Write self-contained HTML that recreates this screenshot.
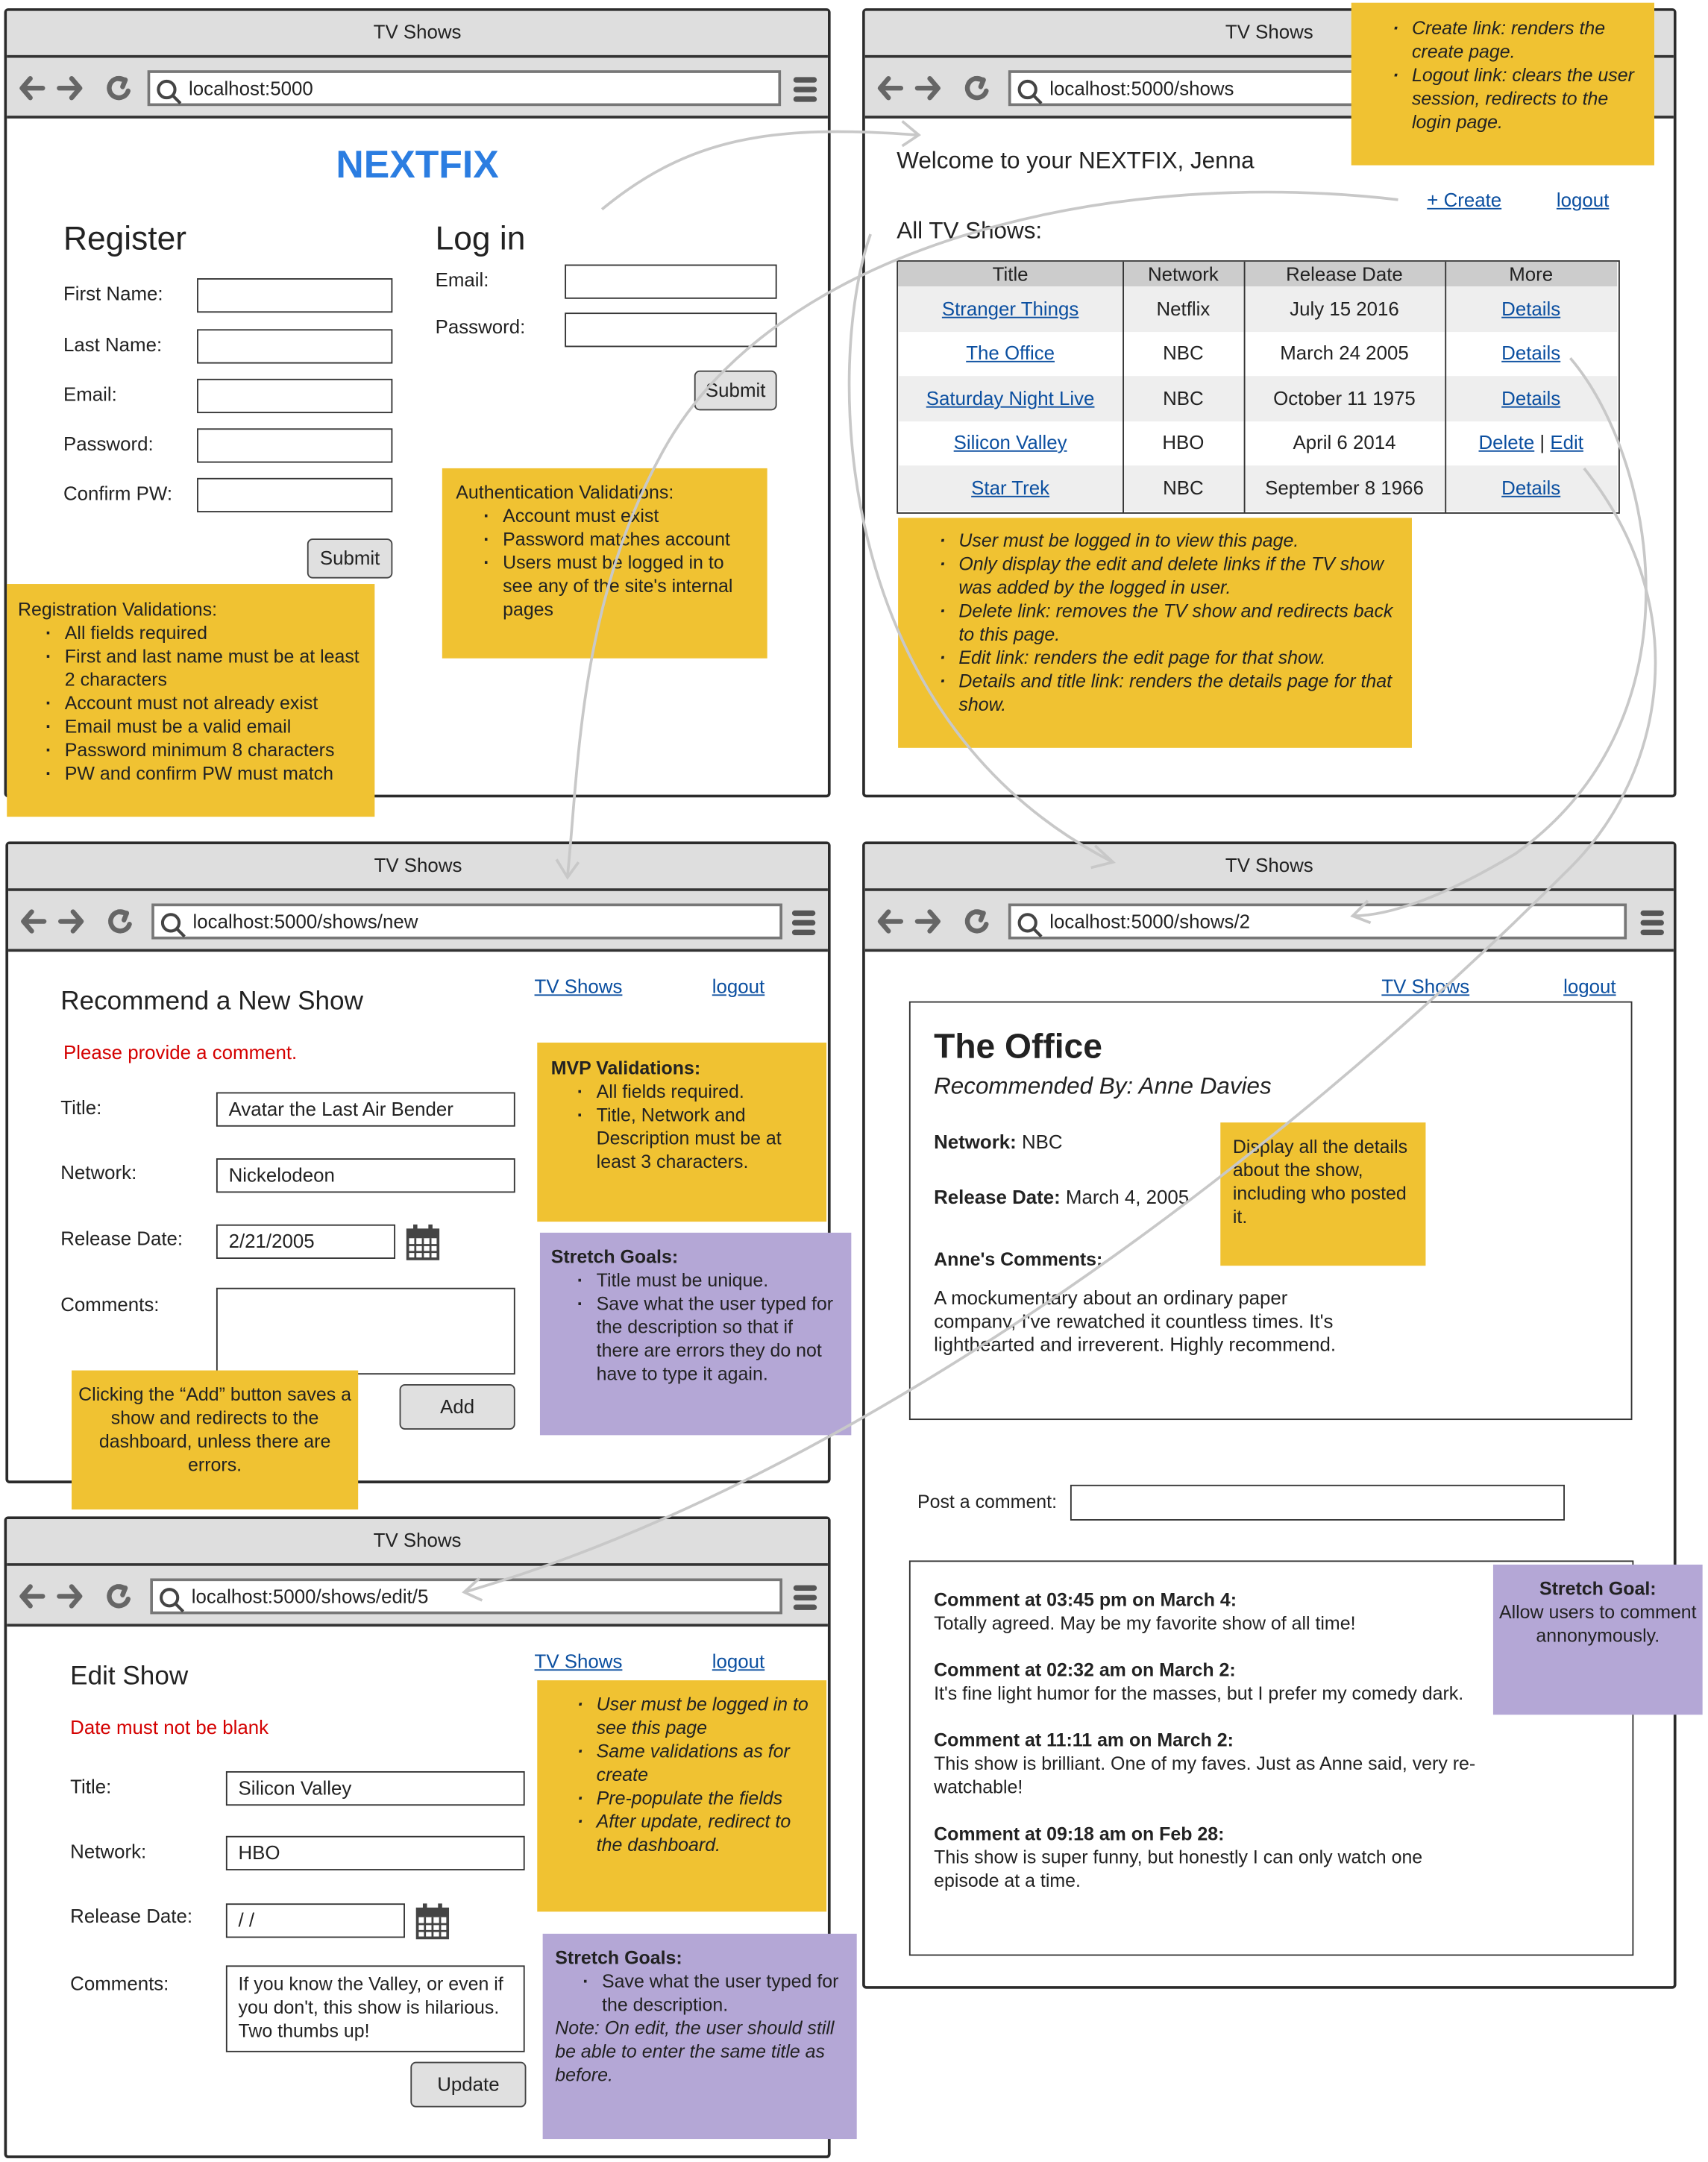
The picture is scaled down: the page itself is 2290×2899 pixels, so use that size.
<!DOCTYPE html>
<html><head><meta charset="utf-8">
<style>
html,body{margin:0;padding:0;background:#fff;}
body{width:2290px;height:2898px;overflow:hidden;position:relative;}
#s{position:absolute;left:0;top:0;width:1240px;height:1570px;transform:scale(1.8468);transform-origin:0 0;font-family:"Liberation Sans",sans-serif;font-size:14px;color:#222;}
#s div,#s span.a{position:absolute;box-sizing:border-box;}
.w{border:2px solid #2b2b2b;border-radius:3px;background:#fff;}
.tb{left:0;right:0;top:0;height:34px;background:#dedede;border-bottom:2px solid #333;text-align:center;line-height:30px;font-size:14px;}
.nb{left:0;right:0;top:34px;height:44px;background:#dedede;border-bottom:2px solid #333;}
.url{top:9px;height:26px;background:#fff;border:2px solid #777;line-height:22px;padding-left:28px;font-size:14px;}
.in{border:1.5px solid #333;background:#fff;height:25px;line-height:22px;padding-left:8px;font-size:14px;}
.btn{background:#e0e0e0;border:1.5px solid #444;border-radius:4px;text-align:center;font-size:14px;}
.y{background:#f0c232;}
.p{background:#b4a7d6;}
.n{font-size:13.5px;line-height:17px;}
.n ul{margin:0;padding-left:34px;list-style:none;}
.n li{position:relative;}
.n li:before{content:"·";position:absolute;left:-14px;font-weight:bold;}
a,.l{color:#0b4fa0;text-decoration:underline;}
.red{color:#d40000;}
</style></head><body><div id="s">

<!-- arrows -->
<svg style="position:absolute;left:0;top:0;z-index:5;pointer-events:none" width="1240" height="1570" fill="none" stroke="#c8c8c8" stroke-width="2">
<path d="M437 152 C500 100 560 90 666 98"/><path d="M655 88 L667 98 L655 106"/>
<path d="M1015 145 C800 120 560 180 480 330 C420 440 420 560 412 636"/><path d="M404 624 L412 637 L420 626"/>
<path d="M632 170 C600 260 600 520 808 626"/><path d="M795 614 L808 626 L792 630"/>
<path d="M1140 260 C1200 330 1240 520 1100 620 C1050 650 1010 665 982 665"/><path d="M993 654 L982 665 L995 670"/>
<path d="M1150 340 C1230 440 1210 560 1140 630 C900 870 600 1080 337 1156"/><path d="M348 1146 L337 1156 L350 1162"/>
</svg>

<!-- W1 -->
<div class="w" style="left:3px;top:6px;width:600px;height:573px">
 <div class="tb">TV Shows</div>
 <div class="nb">
  <svg style="position:absolute;left:8px;top:12px" width="90" height="20" fill="none" stroke="#666" stroke-width="3.5" stroke-linecap="round" stroke-linejoin="round"><path d="M18 10H3M9 3L3 10L9 17"/><path d="M30 10H45M39 3L45 10L39 17"/><path d="M77 4A7 7 0 1 0 80 12"/><path d="M72 3L78 4L76 9"/></svg>
  <div class="url" style="left:102px;width:460px">localhost:5000</div>
  <svg style="position:absolute;left:108px;top:15px" width="20" height="20" fill="none" stroke="#444" stroke-width="2.2"><circle cx="8" cy="8" r="6"/><path d="M12 12L18 18"/></svg>
  <svg style="position:absolute;left:570px;top:13px" width="20" height="20" fill="#555"><rect x="1" y="1" width="17" height="4" rx="2"/><rect x="1" y="8" width="17" height="4" rx="2"/><rect x="1" y="15" width="17" height="4" rx="2"/></svg>
 </div>
 <div style="left:0;width:596px;top:96px;text-align:center;color:#2b7de1;font-weight:bold;font-size:28px;">NEXTFIX</div>
 <div style="left:41px;top:152px;font-size:24px">Register</div>
 <div style="left:311px;top:152px;font-size:24px">Log in</div>
 <div style="left:41px;top:197px">First Name:</div><div class="in" style="left:138px;top:194px;width:142px"></div>
 <div style="left:41px;top:234px">Last Name:</div><div class="in" style="left:138px;top:231px;width:142px"></div>
 <div style="left:41px;top:270px">Email:</div><div class="in" style="left:138px;top:267px;width:142px"></div>
 <div style="left:41px;top:306px">Password:</div><div class="in" style="left:138px;top:303px;width:142px"></div>
 <div style="left:41px;top:342px">Confirm PW:</div><div class="in" style="left:138px;top:339px;width:142px"></div>
 <div class="btn" style="left:218px;top:383px;width:62px;height:29px;line-height:26px">Submit</div>
 <div style="left:311px;top:187px">Email:</div><div class="in" style="left:405px;top:184px;width:154px"></div>
 <div style="left:311px;top:221px">Password:</div><div class="in" style="left:405px;top:219px;width:154px"></div>
 <div class="btn" style="left:499px;top:261px;width:60px;height:29px;line-height:26px">Submit</div>
</div>
<div class="y n" style="left:321px;top:340px;width:236px;height:138px;padding:9px 10px">Authentication Validations:<ul><li>Account must exist</li><li>Password matches account</li><li>Users must be logged in to see any of the site's internal pages</li></ul></div>
<div class="y n" style="left:5px;top:424px;width:267px;height:169px;padding:10px 8px">Registration Validations:<ul><li>All fields required</li><li>First and last name must be at least 2 characters</li><li>Account must not already exist</li><li>Email must be a valid email</li><li>Password minimum 8 characters</li><li>PW and confirm PW must match</li></ul></div>

<!-- W2 -->
<div class="w" style="left:626px;top:6px;width:591px;height:573px">
 <div class="tb">TV Shows</div>
 <div class="nb">
  <svg style="position:absolute;left:8px;top:12px" width="90" height="20" fill="none" stroke="#666" stroke-width="3.5" stroke-linecap="round" stroke-linejoin="round"><path d="M18 10H3M9 3L3 10L9 17"/><path d="M30 10H45M39 3L45 10L39 17"/><path d="M77 4A7 7 0 1 0 80 12"/><path d="M72 3L78 4L76 9"/></svg>
  <div class="url" style="left:104px;width:460px">localhost:5000/shows</div>
  <svg style="position:absolute;left:110px;top:15px" width="20" height="20" fill="none" stroke="#444" stroke-width="2.2"><circle cx="8" cy="8" r="6"/><path d="M12 12L18 18"/></svg>
 </div>
 <div style="left:23px;top:99px;font-size:17px">Welcome to your NEXTFIX, Jenna</div>
 <div class="l" style="left:408px;top:129px">+ Create</div>
 <div class="l" style="left:502px;top:129px">logout</div>
 <div style="left:23px;top:150px;font-size:17px">All TV Shows:</div>
</div>
<div style="left:651px;top:189px;width:525px;height:184px;border:1.5px solid #333;background:#fff">
 <div style="left:0;top:0;width:522px;height:18px;background:#ccc"></div>
 <div style="left:0;top:18px;width:522px;height:33px;background:#eee"></div>
 <div style="left:0;top:83px;width:522px;height:33px;background:#eee"></div>
 <div style="left:0;top:148px;width:522px;height:33px;background:#eee"></div>
 <div style="left:163px;top:0;height:182px;border-left:1.5px solid #333"></div>
 <div style="left:251px;top:0;height:182px;border-left:1.5px solid #333"></div>
 <div style="left:397px;top:0;height:182px;border-left:1.5px solid #333"></div>
 <div style="left:0;width:163px;top:0;text-align:center;line-height:18px">Title</div>
 <div style="left:163px;width:88px;top:0;text-align:center;line-height:18px">Network</div>
 <div style="left:251px;width:146px;top:0;text-align:center;line-height:18px">Release Date</div>
 <div style="left:397px;width:125px;top:0;text-align:center;line-height:18px">More</div>
 <div style="left:0;width:163px;top:26px;text-align:center"><span class="l">Stranger Things</span></div>
 <div style="left:163px;width:88px;top:26px;text-align:center">Netflix</div>
 <div style="left:251px;width:146px;top:26px;text-align:center">July 15 2016</div>
 <div style="left:397px;width:125px;top:26px;text-align:center"><span class="l">Details</span></div>
 <div style="left:0;width:163px;top:58px;text-align:center"><span class="l">The Office</span></div>
 <div style="left:163px;width:88px;top:58px;text-align:center">NBC</div>
 <div style="left:251px;width:146px;top:58px;text-align:center">March 24 2005</div>
 <div style="left:397px;width:125px;top:58px;text-align:center"><span class="l">Details</span></div>
 <div style="left:0;width:163px;top:91px;text-align:center"><span class="l">Saturday Night Live</span></div>
 <div style="left:163px;width:88px;top:91px;text-align:center">NBC</div>
 <div style="left:251px;width:146px;top:91px;text-align:center">October 11 1975</div>
 <div style="left:397px;width:125px;top:91px;text-align:center"><span class="l">Details</span></div>
 <div style="left:0;width:163px;top:123px;text-align:center"><span class="l">Silicon Valley</span></div>
 <div style="left:163px;width:88px;top:123px;text-align:center">HBO</div>
 <div style="left:251px;width:146px;top:123px;text-align:center">April 6 2014</div>
 <div style="left:397px;width:125px;top:123px;text-align:center"><span class="l">Delete</span> | <span class="l">Edit</span></div>
 <div style="left:0;width:163px;top:156px;text-align:center"><span class="l">Star Trek</span></div>
 <div style="left:163px;width:88px;top:156px;text-align:center">NBC</div>
 <div style="left:251px;width:146px;top:156px;text-align:center">September 8 1966</div>
 <div style="left:397px;width:125px;top:156px;text-align:center"><span class="l">Details</span></div>
</div>
<div class="y n" style="left:981px;top:2px;width:220px;height:118px;padding:10px 10px;font-style:italic"><ul style="padding-left:34px"><li>Create link: renders the create page.</li><li>Logout link: clears the user session, redirects to the login page.</li></ul></div>
<div class="y n" style="left:652px;top:376px;width:373px;height:167px;padding:8px 8px;font-style:italic"><ul style="padding-left:36px"><li>User must be logged in to view this page.</li><li>Only display the edit and delete links if the TV show was added by the logged in user.</li><li>Delete link: removes the TV show and redirects back to this page.</li><li>Edit link: renders the edit page for that show.</li><li>Details and title link: renders the details page for that show.</li></ul></div>

<!-- W3 -->
<div class="w" style="left:4px;top:611px;width:599px;height:466px">
 <div class="tb">TV Shows</div>
 <div class="nb">
  <svg style="position:absolute;left:8px;top:12px" width="90" height="20" fill="none" stroke="#666" stroke-width="3.5" stroke-linecap="round" stroke-linejoin="round"><path d="M18 10H3M9 3L3 10L9 17"/><path d="M30 10H45M39 3L45 10L39 17"/><path d="M77 4A7 7 0 1 0 80 12"/><path d="M72 3L78 4L76 9"/></svg>
  <div class="url" style="left:104px;width:458px">localhost:5000/shows/new</div>
  <svg style="position:absolute;left:110px;top:15px" width="20" height="20" fill="none" stroke="#444" stroke-width="2.2"><circle cx="8" cy="8" r="6"/><path d="M12 12L18 18"/></svg>
  <svg style="position:absolute;left:568px;top:13px" width="20" height="20" fill="#555"><rect x="1" y="1" width="17" height="4" rx="2"/><rect x="1" y="8" width="17" height="4" rx="2"/><rect x="1" y="15" width="17" height="4" rx="2"/></svg>
 </div>
 <div style="left:38px;top:104px;font-size:19px">Recommend a New Show</div>
 <div class="l" style="left:382px;top:95px">TV Shows</div>
 <div class="l" style="left:511px;top:95px">logout</div>
 <div class="red" style="left:40px;top:143px">Please provide a comment.</div>
 <div style="left:38px;top:183px">Title:</div><div class="in" style="left:151px;top:180px;width:217px">Avatar the Last Air Bender</div>
 <div style="left:38px;top:230px">Network:</div><div class="in" style="left:151px;top:228px;width:217px">Nickelodeon</div>
 <div style="left:38px;top:278px">Release Date:</div><div class="in" style="left:151px;top:276px;width:130px">2/21/2005</div>
 <svg style="position:absolute;left:288px;top:276px" width="26" height="27"><rect x="2" y="4" width="22" height="21" fill="#fff" stroke="#444" stroke-width="2"/><rect x="2" y="4" width="22" height="6" fill="#444"/><path d="M2 15H24M2 20H24M7.5 10V25M13 10V25M18.5 10V25" stroke="#444" stroke-width="1.5"/><rect x="6" y="0" width="3" height="7" fill="#444"/><rect x="17" y="0" width="3" height="7" fill="#444"/></svg>
 <div style="left:38px;top:326px">Comments:</div><div class="in" style="left:151px;top:322px;width:217px;height:63px"></div>
 <div class="btn" style="left:284px;top:392px;width:84px;height:33px;line-height:30px">Add</div>
</div>
<div class="y n" style="left:390px;top:757px;width:210px;height:130px;padding:10px 10px"><b>MVP Validations:</b><ul style="padding-left:33px"><li>All fields required.</li><li>Title, Network and Description must be at least 3 characters.</li></ul></div>
<div class="p n" style="left:392px;top:895px;width:226px;height:147px;padding:9px 8px"><b>Stretch Goals:</b><ul style="padding-left:33px"><li>Title must be unique.</li><li>Save what the user typed for the description so that if there are errors they do not have to type it again.</li></ul></div>
<div class="y n" style="left:52px;top:995px;width:208px;height:101px;padding:9px 4px;text-align:center">Clicking the “Add” button saves a show and redirects to the dashboard, unless there are errors.</div>

<!-- W4 -->
<div class="w" style="left:626px;top:611px;width:591px;height:833px">
 <div class="tb">TV Shows</div>
 <div class="nb">
  <svg style="position:absolute;left:8px;top:12px" width="90" height="20" fill="none" stroke="#666" stroke-width="3.5" stroke-linecap="round" stroke-linejoin="round"><path d="M18 10H3M9 3L3 10L9 17"/><path d="M30 10H45M39 3L45 10L39 17"/><path d="M77 4A7 7 0 1 0 80 12"/><path d="M72 3L78 4L76 9"/></svg>
  <div class="url" style="left:104px;width:449px">localhost:5000/shows/2</div>
  <svg style="position:absolute;left:110px;top:15px" width="20" height="20" fill="none" stroke="#444" stroke-width="2.2"><circle cx="8" cy="8" r="6"/><path d="M12 12L18 18"/></svg>
  <svg style="position:absolute;left:562px;top:13px" width="20" height="20" fill="#555"><rect x="1" y="1" width="17" height="4" rx="2"/><rect x="1" y="8" width="17" height="4" rx="2"/><rect x="1" y="15" width="17" height="4" rx="2"/></svg>
 </div>
 <div class="l" style="left:375px;top:95px">TV Shows</div>
 <div class="l" style="left:507px;top:95px">logout</div>
 <div style="left:32px;top:114px;width:525px;height:304px;border:1.5px solid #333"></div>
 <div style="left:50px;top:133px;font-size:25px;font-weight:bold">The Office</div>
 <div style="left:50px;top:166px;font-size:17px;font-style:italic">Recommended By: Anne Davies</div>
 <div style="left:50px;top:208px"><b>Network:</b> NBC</div>
 <div style="left:50px;top:248px"><b>Release Date:</b> March 4, 2005</div>
 <div style="left:50px;top:294px;font-weight:bold;font-size:13.5px">Anne's Comments:</div>
 <div style="left:50px;top:321px;width:310px;line-height:17px">A mockumentary about an ordinary paper company, I've rewatched it countless times. It's lighthearted and irreverent. Highly recommend.</div>
 <div style="left:38px;top:470px;font-size:13.5px">Post a comment:</div>
 <div class="in" style="left:149px;top:465px;width:359px;height:26px"></div>
 <div style="left:32px;top:520px;width:526px;height:287px;border:1.5px solid #333"></div>
 <div style="left:50px;top:540px;width:420px;font-size:13.5px;line-height:17px"><b>Comment at 03:45 pm on March 4:</b><br>Totally agreed. May be my favorite show of all time!</div>
 <div style="left:50px;top:591px;width:420px;font-size:13.5px;line-height:17px"><b>Comment at 02:32 am on March 2:</b><br>It's fine light humor for the masses, but I prefer my comedy dark.</div>
 <div style="left:50px;top:642px;width:400px;font-size:13.5px;line-height:17px"><b>Comment at 11:11 am on March 2:</b><br>This show is brilliant. One of my faves. Just as Anne said, very re-watchable!</div>
 <div style="left:50px;top:710px;width:400px;font-size:13.5px;line-height:17px"><b>Comment at 09:18 am on Feb 28:</b><br>This show is super funny, but honestly I can only watch one episode at a time.</div>
</div>
<div class="y n" style="left:886px;top:815px;width:149px;height:104px;padding:9px 9px">Display all the details about the show, including who posted it.</div>
<div class="p n" style="left:1084px;top:1136px;width:152px;height:109px;padding:9px 4px;text-align:center"><b>Stretch Goal:</b><br>Allow users to comment annonymously.</div>

<!-- W5 -->
<div class="w" style="left:3px;top:1101px;width:600px;height:466px">
 <div class="tb">TV Shows</div>
 <div class="nb">
  <svg style="position:absolute;left:8px;top:12px" width="90" height="20" fill="none" stroke="#666" stroke-width="3.5" stroke-linecap="round" stroke-linejoin="round"><path d="M18 10H3M9 3L3 10L9 17"/><path d="M30 10H45M39 3L45 10L39 17"/><path d="M77 4A7 7 0 1 0 80 12"/><path d="M72 3L78 4L76 9"/></svg>
  <div class="url" style="left:104px;width:459px">localhost:5000/shows/edit/5</div>
  <svg style="position:absolute;left:110px;top:15px" width="20" height="20" fill="none" stroke="#444" stroke-width="2.2"><circle cx="8" cy="8" r="6"/><path d="M12 12L18 18"/></svg>
  <svg style="position:absolute;left:570px;top:13px" width="20" height="20" fill="#555"><rect x="1" y="1" width="17" height="4" rx="2"/><rect x="1" y="8" width="17" height="4" rx="2"/><rect x="1" y="15" width="17" height="4" rx="2"/></svg>
 </div>
 <div style="left:46px;top:104px;font-size:19px">Edit Show</div>
 <div class="l" style="left:383px;top:95px">TV Shows</div>
 <div class="l" style="left:512px;top:95px">logout</div>
 <div class="red" style="left:46px;top:143px">Date must not be blank</div>
 <div style="left:46px;top:186px">Title:</div><div class="in" style="left:159px;top:183px;width:217px">Silicon Valley</div>
 <div style="left:46px;top:233px">Network:</div><div class="in" style="left:159px;top:230px;width:217px">HBO</div>
 <div style="left:46px;top:280px">Release Date:</div><div class="in" style="left:159px;top:279px;width:130px">/ /</div>
 <svg style="position:absolute;left:296px;top:279px" width="26" height="27"><rect x="2" y="4" width="22" height="21" fill="#fff" stroke="#444" stroke-width="2"/><rect x="2" y="4" width="22" height="6" fill="#444"/><path d="M2 15H24M2 20H24M7.5 10V25M13 10V25M18.5 10V25" stroke="#444" stroke-width="1.5"/><rect x="6" y="0" width="3" height="7" fill="#444"/><rect x="17" y="0" width="3" height="7" fill="#444"/></svg>
 <div style="left:46px;top:329px">Comments:</div>
 <div class="in" style="left:159px;top:324px;width:217px;height:63px;line-height:17px;padding-top:4px;font-size:13.5px">If you know the Valley, or even if you don't, this show is hilarious. Two thumbs up!</div>
 <div class="btn" style="left:293px;top:394px;width:84px;height:33px;line-height:30px">Update</div>
</div>
<div class="y n" style="left:390px;top:1220px;width:210px;height:168px;padding:9px 8px;font-style:italic"><ul style="padding-left:35px"><li>User must be logged in to see this page</li><li>Same validations as for create</li><li>Pre-populate the fields</li><li>After update, redirect to the dashboard.</li></ul></div>
<div class="p n" style="left:394px;top:1404px;width:228px;height:149px;padding:9px 9px"><b>Stretch Goals:</b><ul style="padding-left:34px"><li>Save what the user typed for the description.</li></ul><i>Note: On edit, the user should still be able to enter the same title as before.</i></div>

</div></body></html>
